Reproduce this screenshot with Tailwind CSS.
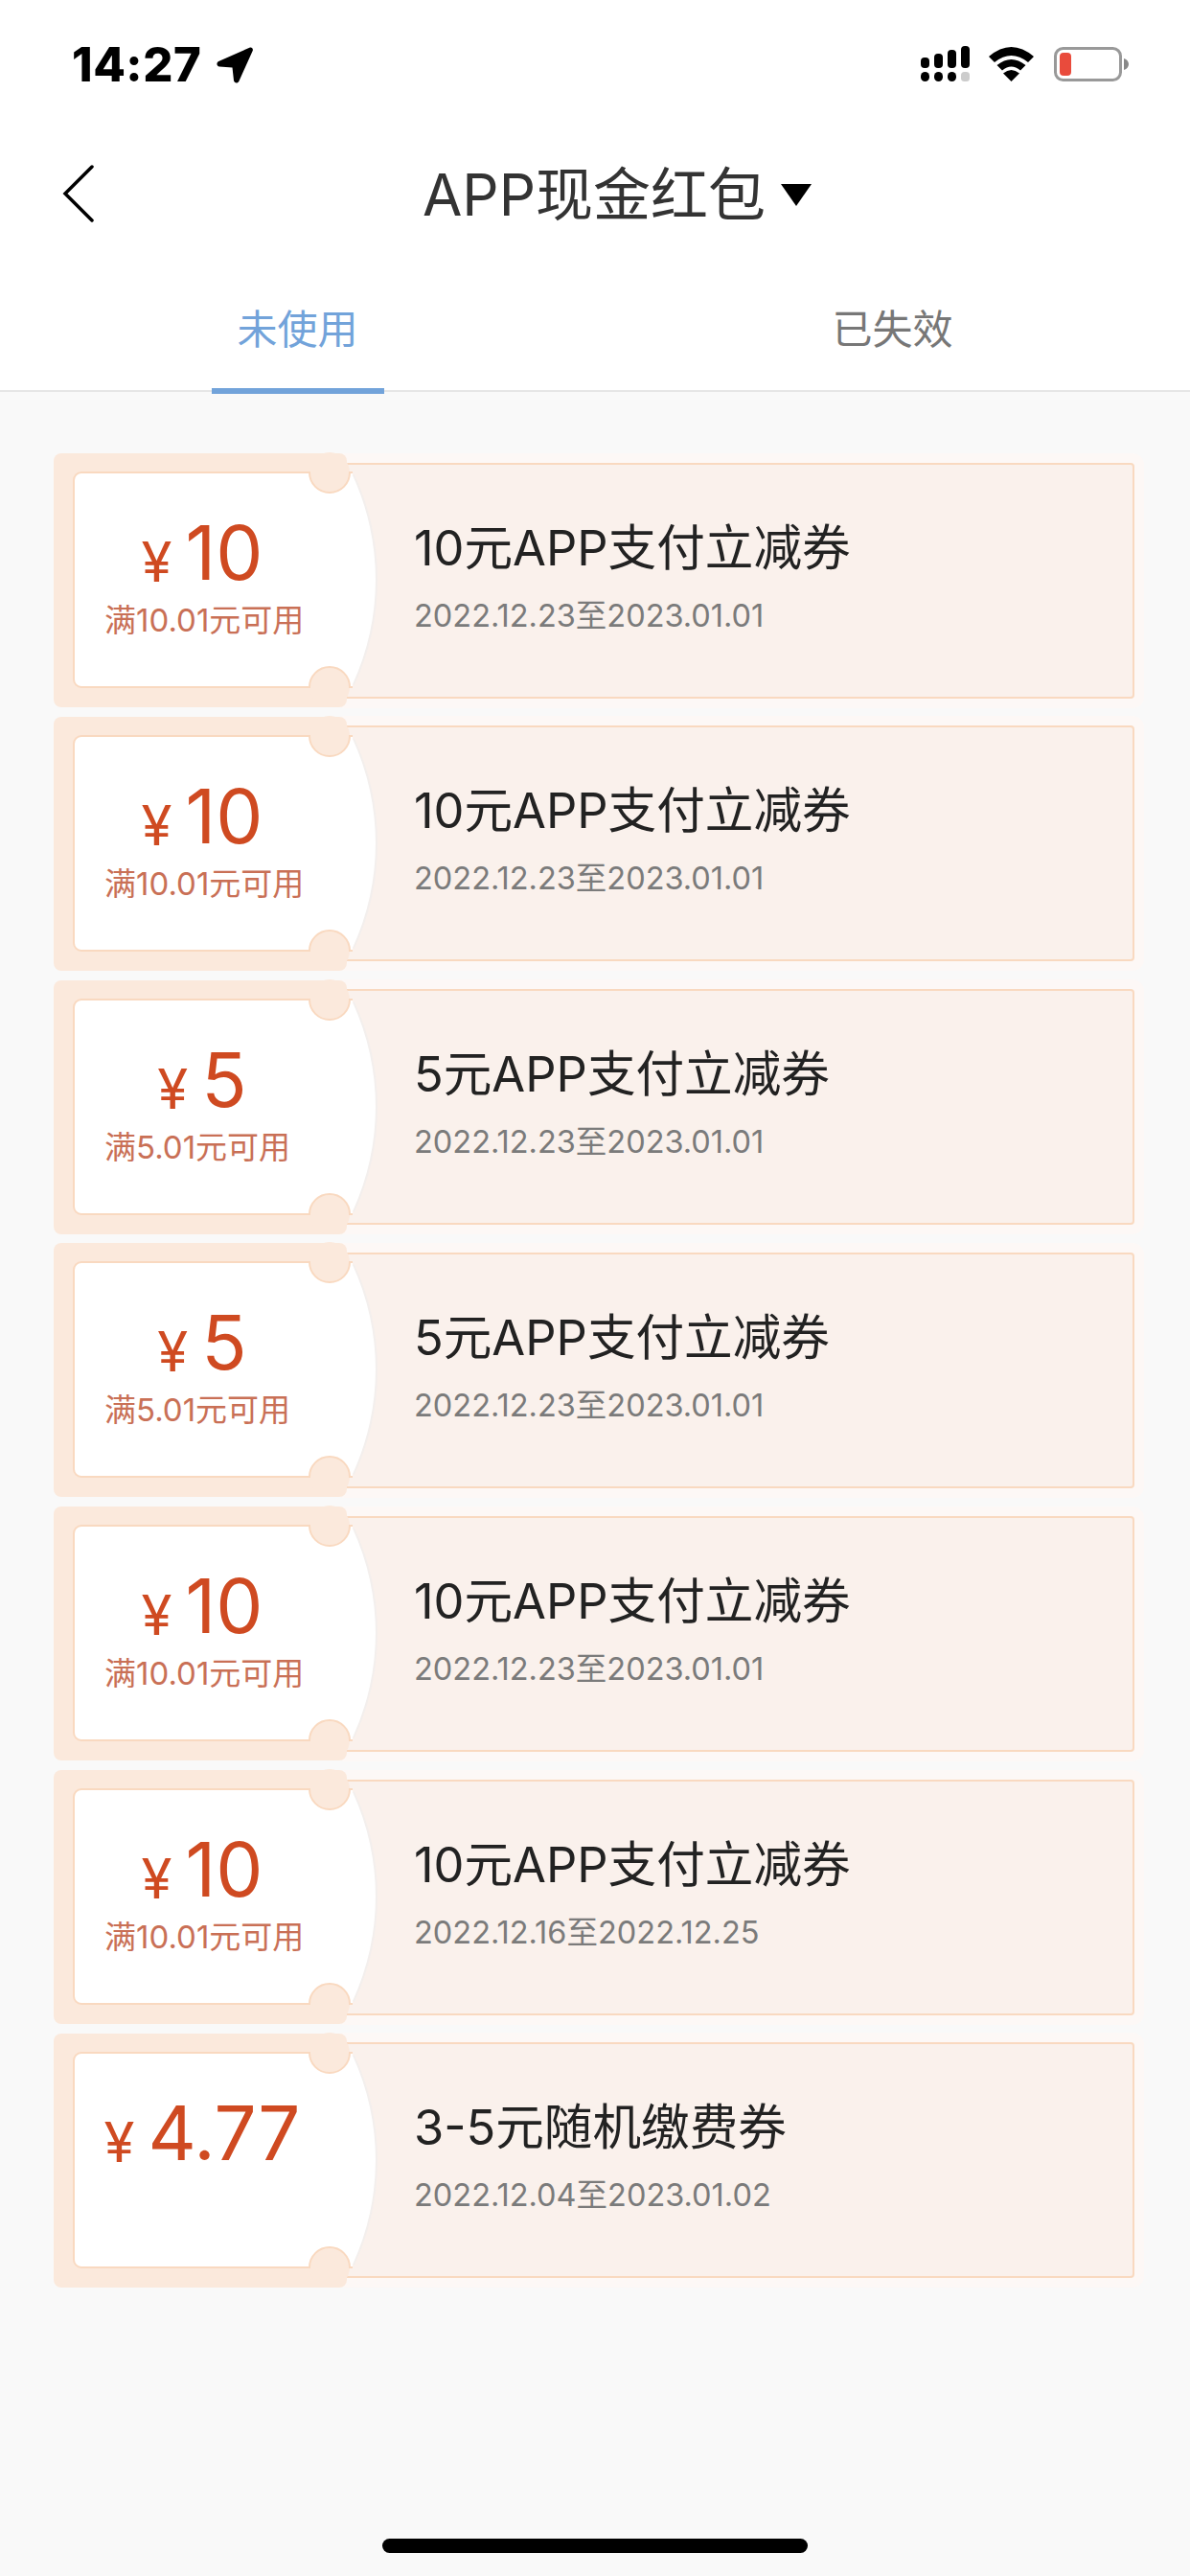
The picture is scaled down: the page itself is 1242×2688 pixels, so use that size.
<!DOCTYPE html>
<html><head><meta charset="utf-8"><script src="https://cdn.jsdelivr.net/npm/@tailwindcss/browser@4"></script></head>
<body class="m-0 bg-[#f9f9f9]">
<svg width="0" height="0" class="absolute"><defs>
<symbol id="tk" viewBox="0 0 360 265" overflow="visible">
<circle cx="288" cy="20" r="21" fill="#fbe9dc"/><circle cx="288" cy="244" r="21" fill="#fbe9dc"/>
<path d="M312 23A260 260 0 0 1 312 241" fill="none" stroke="#f3efed" stroke-width="4"/>
<path d="M29 20H267A21 21 0 0 0 309 20H312L312 23A260 260 0 0 1 312 241L312 244H309A21 21 0 0 0 267 244H29A8 8 0 0 1 21 236V28A8 8 0 0 1 29 20Z" fill="#fff"/>
<path d="M312 20H309A21 21 0 0 1 267 20H29A8 8 0 0 0 21 28V236A8 8 0 0 0 29 244H267A21 21 0 0 1 309 244H312" fill="none" stroke="#f9d9c0" stroke-width="2"/>
</symbol></defs></svg>
<div class="relative flex h-[2688px] w-[1242px] flex-col overflow-hidden font-['Inter','Noto_Sans_CJK_SC',sans-serif]">
<header class="bg-white">
<div class="flex h-[153px] items-start justify-between pl-[75px] pr-[64px] pt-[48px]">
<div class="flex items-center gap-[15px]"><span class="text-[49px] font-extrabold leading-[40px] tracking-[0.5px] text-black">14:27</span>
<svg width="40" height="40" viewBox="0 0 40 40"><path d="M36 1.500C38 1 39.500 3 38.700 5L24.500 36.500C23.200 39.500 19.500 39 19 36L17.500 22.500L4 21.500C1 21 0.500 17.500 3.200 16L36 1.500Z" fill="#000"/></svg></div>
<div class="flex items-center gap-[22px]">
<svg width="52" height="38" viewBox="0 0 52 38" class="mr-[-3px]"><g fill="#000"><rect x="0" y="12" width="9" height="11" rx="4"/><rect x="14" y="8" width="9" height="15" rx="4"/><rect x="28" y="4" width="9" height="19" rx="4"/><rect x="42" y="0" width="9" height="23" rx="4"/><rect x="0" y="27" width="9" height="10" rx="4.500"/><rect x="14" y="27" width="9" height="10" rx="4.500"/><rect x="28" y="27" width="9" height="10" rx="4.500"/><rect x="42" y="27" width="9" height="10" rx="3.500" fill="#cccccc"/></g></svg>
<svg width="47" height="36" viewBox="0 0 47 36"><path d="M0 10Q23.500 -10 47 10L41 16Q23.500 2 6 16Z" fill="#000"/><path d="M8.500 19Q23.500 7 38.500 19L33 24.500Q23.500 16.500 14 24.500Z" fill="#000"/><path d="M23.500 36L15 27.500Q23.500 20.500 32 27.500Z" fill="#000"/></svg>
<svg width="78" height="36" viewBox="0 0 78 36" class="ml-[-1px]"><rect x="1.500" y="1.500" width="68" height="33" rx="8" fill="none" stroke="#999999" stroke-width="3"/><rect x="6" y="6" width="12" height="24" rx="4" fill="#e94b3c"/><path d="M73 12C76.500 13 78 15.500 78 18C78 20.500 76.500 23 73 24Z" fill="#888888"/></svg>
</div></div>
<div class="relative flex h-[100px] items-center justify-center pl-[46px]">
<svg width="34" height="60" viewBox="0 0 34 60" class="absolute left-[65px] top-[19px]"><path d="M31 2L3 30L31 58" fill="none" stroke="#000" stroke-width="3.500" stroke-linecap="round"/></svg>
<span class="text-[60px] leading-[70px] text-[#333333]">APP现金红包</span>
<span class="ml-[16px] h-0 w-0 border-x-[16px] border-t-[23px] border-x-transparent border-t-black"></span>
</div>
<div class="flex h-[156px] border-b-2 border-[#e6e6e6]">
<div class="flex flex-1 justify-center pt-[65px] text-[42px] leading-[52px] text-[#72a3da]"><span class="relative h-[91px]">未使用<span class="absolute bottom-0 left-[-26px] h-[6px] w-[180px] translate-y-[2px] bg-[#72a3da]"></span></span></div>
<div class="flex flex-1 justify-center pt-[65px] text-[42px] leading-[52px] text-[#777777]"><span>已失效</span></div>
</div>
</header>
<main class="flex flex-col gap-[9.830px] pl-[56px] pr-[58px] pt-[64px]">

<article class="relative flex h-[265px] items-center">
<div class="relative z-10 h-[265px] w-[306px] shrink-0 rounded-[8px] bg-[#fbe9dc]"></div>
<svg class="absolute left-0 top-0 z-10 h-[265px] w-[360px] overflow-visible"><use href="#tk"/></svg>
<div class="absolute left-[53px] top-[60px] z-20 w-[204px]"><div class="flex h-[88px] items-end justify-center gap-[14px] text-[#cf4a21]"><span class="text-[58px] leading-[70px]">¥</span><span class="text-[78px] leading-[88px]">10</span></div><div class="mt-[6px] whitespace-nowrap text-[33px] leading-[40px] text-[#c97056]">满10.01元可用</div></div>
<div class="ml-[-4px] flex h-[246px] flex-1 flex-col rounded-[4px] border-2 border-[#f9d9c0] bg-[#faf1ec] pl-[72px] pt-[57px] shadow-[0_0_0_10px_#fdf8f6]"><div class="whitespace-nowrap text-[50.600px] leading-[60px] text-[#222222]">10元APP支付立减券</div><div class="mt-[21px] whitespace-nowrap text-[32.500px] leading-[40px] text-[#7b7b7b]">2022.12.23至2023.01.01</div></div>
</article>

<article class="relative flex h-[265px] items-center">
<div class="relative z-10 h-[265px] w-[306px] shrink-0 rounded-[8px] bg-[#fbe9dc]"></div>
<svg class="absolute left-0 top-0 z-10 h-[265px] w-[360px] overflow-visible"><use href="#tk"/></svg>
<div class="absolute left-[53px] top-[60px] z-20 w-[204px]"><div class="flex h-[88px] items-end justify-center gap-[14px] text-[#cf4a21]"><span class="text-[58px] leading-[70px]">¥</span><span class="text-[78px] leading-[88px]">10</span></div><div class="mt-[6px] whitespace-nowrap text-[33px] leading-[40px] text-[#c97056]">满10.01元可用</div></div>
<div class="ml-[-4px] flex h-[246px] flex-1 flex-col rounded-[4px] border-2 border-[#f9d9c0] bg-[#faf1ec] pl-[72px] pt-[57px] shadow-[0_0_0_10px_#fdf8f6]"><div class="whitespace-nowrap text-[50.600px] leading-[60px] text-[#222222]">10元APP支付立减券</div><div class="mt-[21px] whitespace-nowrap text-[32.500px] leading-[40px] text-[#7b7b7b]">2022.12.23至2023.01.01</div></div>
</article>

<article class="relative flex h-[265px] items-center">
<div class="relative z-10 h-[265px] w-[306px] shrink-0 rounded-[8px] bg-[#fbe9dc]"></div>
<svg class="absolute left-0 top-0 z-10 h-[265px] w-[360px] overflow-visible"><use href="#tk"/></svg>
<div class="absolute left-[53px] top-[60px] z-20 w-[204px]"><div class="flex h-[88px] items-end justify-center gap-[14px] text-[#cf4a21]"><span class="text-[58px] leading-[70px]">¥</span><span class="text-[78px] leading-[88px]">5</span></div><div class="mt-[6px] whitespace-nowrap text-[33px] leading-[40px] text-[#c97056]">满5.01元可用</div></div>
<div class="ml-[-4px] flex h-[246px] flex-1 flex-col rounded-[4px] border-2 border-[#f9d9c0] bg-[#faf1ec] pl-[72px] pt-[57px] shadow-[0_0_0_10px_#fdf8f6]"><div class="whitespace-nowrap text-[50.600px] leading-[60px] text-[#222222]">5元APP支付立减券</div><div class="mt-[21px] whitespace-nowrap text-[32.500px] leading-[40px] text-[#7b7b7b]">2022.12.23至2023.01.01</div></div>
</article>

<article class="relative flex h-[265px] items-center">
<div class="relative z-10 h-[265px] w-[306px] shrink-0 rounded-[8px] bg-[#fbe9dc]"></div>
<svg class="absolute left-0 top-0 z-10 h-[265px] w-[360px] overflow-visible"><use href="#tk"/></svg>
<div class="absolute left-[53px] top-[60px] z-20 w-[204px]"><div class="flex h-[88px] items-end justify-center gap-[14px] text-[#cf4a21]"><span class="text-[58px] leading-[70px]">¥</span><span class="text-[78px] leading-[88px]">5</span></div><div class="mt-[6px] whitespace-nowrap text-[33px] leading-[40px] text-[#c97056]">满5.01元可用</div></div>
<div class="ml-[-4px] flex h-[246px] flex-1 flex-col rounded-[4px] border-2 border-[#f9d9c0] bg-[#faf1ec] pl-[72px] pt-[57px] shadow-[0_0_0_10px_#fdf8f6]"><div class="whitespace-nowrap text-[50.600px] leading-[60px] text-[#222222]">5元APP支付立减券</div><div class="mt-[21px] whitespace-nowrap text-[32.500px] leading-[40px] text-[#7b7b7b]">2022.12.23至2023.01.01</div></div>
</article>

<article class="relative flex h-[265px] items-center">
<div class="relative z-10 h-[265px] w-[306px] shrink-0 rounded-[8px] bg-[#fbe9dc]"></div>
<svg class="absolute left-0 top-0 z-10 h-[265px] w-[360px] overflow-visible"><use href="#tk"/></svg>
<div class="absolute left-[53px] top-[60px] z-20 w-[204px]"><div class="flex h-[88px] items-end justify-center gap-[14px] text-[#cf4a21]"><span class="text-[58px] leading-[70px]">¥</span><span class="text-[78px] leading-[88px]">10</span></div><div class="mt-[6px] whitespace-nowrap text-[33px] leading-[40px] text-[#c97056]">满10.01元可用</div></div>
<div class="ml-[-4px] flex h-[246px] flex-1 flex-col rounded-[4px] border-2 border-[#f9d9c0] bg-[#faf1ec] pl-[72px] pt-[57px] shadow-[0_0_0_10px_#fdf8f6]"><div class="whitespace-nowrap text-[50.600px] leading-[60px] text-[#222222]">10元APP支付立减券</div><div class="mt-[21px] whitespace-nowrap text-[32.500px] leading-[40px] text-[#7b7b7b]">2022.12.23至2023.01.01</div></div>
</article>

<article class="relative flex h-[265px] items-center">
<div class="relative z-10 h-[265px] w-[306px] shrink-0 rounded-[8px] bg-[#fbe9dc]"></div>
<svg class="absolute left-0 top-0 z-10 h-[265px] w-[360px] overflow-visible"><use href="#tk"/></svg>
<div class="absolute left-[53px] top-[60px] z-20 w-[204px]"><div class="flex h-[88px] items-end justify-center gap-[14px] text-[#cf4a21]"><span class="text-[58px] leading-[70px]">¥</span><span class="text-[78px] leading-[88px]">10</span></div><div class="mt-[6px] whitespace-nowrap text-[33px] leading-[40px] text-[#c97056]">满10.01元可用</div></div>
<div class="ml-[-4px] flex h-[246px] flex-1 flex-col rounded-[4px] border-2 border-[#f9d9c0] bg-[#faf1ec] pl-[72px] pt-[57px] shadow-[0_0_0_10px_#fdf8f6]"><div class="whitespace-nowrap text-[50.600px] leading-[60px] text-[#222222]">10元APP支付立减券</div><div class="mt-[21px] whitespace-nowrap text-[32.500px] leading-[40px] text-[#7b7b7b]">2022.12.16至2022.12.25</div></div>
</article>

<article class="relative flex h-[265px] items-center">
<div class="relative z-10 h-[265px] w-[306px] shrink-0 rounded-[8px] bg-[#fbe9dc]"></div>
<svg class="absolute left-0 top-0 z-10 h-[265px] w-[360px] overflow-visible"><use href="#tk"/></svg>
<div class="absolute left-[53px] top-[60px] z-20 w-[204px]"><div class="flex h-[88px] items-end justify-center gap-[14px] text-[#cf4a21]"><span class="text-[58px] leading-[70px]">¥</span><span class="text-[78px] leading-[88px]">4.77</span></div></div>
<div class="ml-[-4px] flex h-[246px] flex-1 flex-col rounded-[4px] border-2 border-[#f9d9c0] bg-[#faf1ec] pl-[72px] pt-[57px] shadow-[0_0_0_10px_#fdf8f6]"><div class="whitespace-nowrap text-[50.600px] leading-[60px] text-[#222222]">3-5元随机缴费券</div><div class="mt-[21px] whitespace-nowrap text-[32.500px] leading-[40px] text-[#7b7b7b]">2022.12.04至2023.01.02</div></div>
</article>

</main>
<div class="absolute bottom-[24px] left-[399px] h-[15px] w-[444px] rounded-full bg-black"></div>
</div>
</body></html>
